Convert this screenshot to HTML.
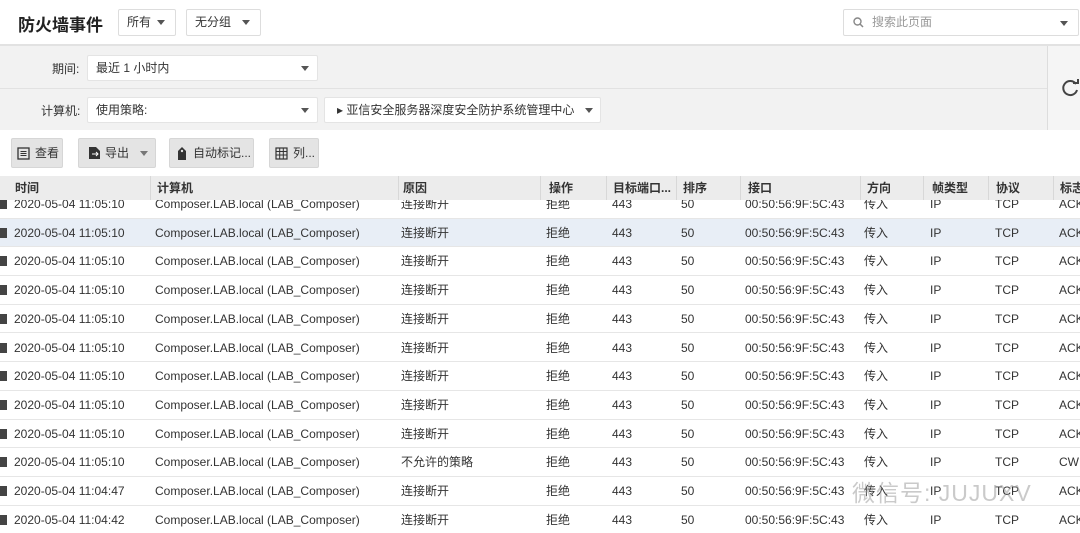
<!DOCTYPE html>
<html><head><meta charset="utf-8"><style>
*{margin:0;padding:0;box-sizing:border-box}
body{width:1080px;height:533px;overflow:hidden;background:#fff;font-family:"Liberation Sans","Noto Sans CJK SC",sans-serif;font-size:12px;color:#333;position:relative}
.a{position:absolute}
.dd{position:absolute;background:#fff;border:1px solid #ddd;border-radius:2px;font-size:12px;line-height:24px;padding-left:8px}
.tri{position:absolute;width:0;height:0;border-left:4px solid transparent;border-right:4px solid transparent;border-top:5px solid #555}
.btn{position:absolute;top:138px;height:30px;background:#e4e4e4;border:1px solid #d6d6d6;border-radius:2px;line-height:28px;font-size:12px;color:#333}
.row{position:absolute;left:0;width:1080px;height:28.7px;border-bottom:1px solid #e6e6e6;line-height:28px;white-space:nowrap}
.row span{position:absolute}
.hd{overflow:hidden;white-space:nowrap}
.hd span{position:absolute;font-weight:bold;color:#333;line-height:25px}
.sep{position:absolute;top:176px;width:1px;height:24px;background:#d8d8d8}
.ic{position:absolute;left:0;top:9px;width:7px;height:10px;background:#444}
</style></head><body>
<div class="a" style="left:18px;top:11px;font-size:17px;font-weight:bold;color:#222">防火墙事件</div>
<div class="dd" style="left:118px;top:9px;width:58px;height:27px">所有<div class="tri" style="left:38px;top:10px"></div></div>
<div class="dd" style="left:186px;top:9px;width:75px;height:27px">无分组<div class="tri" style="left:55px;top:10px"></div></div>
<div class="dd" style="left:843px;top:9px;width:236px;height:27px;color:#999;padding-left:28px">搜索此页面
<svg class="a" style="left:9px;top:7px" width="11" height="11" viewBox="0 0 11 11"><circle cx="4.5" cy="4.5" r="3.5" fill="none" stroke="#888" stroke-width="1.4"/><path d="M7 7l3 3" stroke="#888" stroke-width="1.5"/></svg>
<div class="tri" style="left:216px;top:11px"></div></div>
<div class="a" style="left:0;top:44px;width:1080px;height:2px;background:#e2e2e2"></div>
<div class="a" style="left:0;top:46px;width:1047px;height:84px;background:#f2f2f2"></div>
<div class="a" style="left:0;top:88px;width:1047px;height:1px;background:#e2e2e2"></div>
<div class="a" style="left:1047px;top:46px;width:1px;height:84px;background:#ddd"></div>
<div class="a" style="left:1048px;top:46px;width:32px;height:84px;background:#f5f5f5"></div>
<svg class="a" style="left:1061px;top:79px" width="19" height="19" viewBox="0 0 19 19"><path d="M15 5A7 7 0 1 0 16 11" fill="none" stroke="#444" stroke-width="2"/><path d="M12 4h5V-1" fill="none" stroke="#444" stroke-width="2"/></svg>
<div class="a" style="left:52px;top:60px">期间:</div>
<div class="dd" style="left:87px;top:55px;width:231px;height:26px;border-color:#e4e4e4">最近 1 小时内<div class="tri" style="left:213px;top:10px"></div></div>
<div class="a" style="left:41px;top:102px">计算机:</div>
<div class="dd" style="left:87px;top:97px;width:231px;height:26px;border-color:#e4e4e4">使用策略:<div class="tri" style="left:213px;top:10px"></div></div>
<div class="dd" style="left:324px;top:97px;width:277px;height:26px;border-color:#e4e4e4;padding-left:12px">▸ 亚信安全服务器深度安全防护系统管理中心<div class="tri" style="left:260px;top:10px"></div></div>
<div class="btn" style="left:11px;width:52px;padding-left:23px"><svg class="a" style="left:5px;top:8px" width="13" height="13"><rect x="1" y="1" width="11" height="11" fill="none" stroke="#333" stroke-width="1.3"/><path d="M3.5 4.5h6M3.5 6.5h6M3.5 8.5h6" stroke="#333"/></svg>查看</div>
<div class="btn" style="left:78px;width:78px;padding-left:26px"><svg class="a" style="left:9px;top:7px" width="13" height="14"><path d="M1 1h7l4 4v8H1z" fill="#333"/><path d="M4 8h6M8 6l2 2-2 2" stroke="#fff" fill="none"/></svg>导出<div class="tri" style="left:61px;top:12px;border-top-color:#777"></div></div>
<div class="btn" style="left:169px;width:85px;padding-left:23px"><svg class="a" style="left:6px;top:7px" width="12" height="15"><path d="M2 5l4-4 4 4v9H2z" fill="#333"/><circle cx="6" cy="5" r="1.2" fill="#e4e4e4"/></svg>自动标记...</div>
<div class="btn" style="left:269px;width:50px;padding-left:23px"><svg class="a" style="left:5px;top:8px" width="14" height="13"><rect x="1" y="1" width="11" height="11" fill="none" stroke="#333" stroke-width="1.2"/><path d="M1 4.5h11M1 8h11M4.7 1v11M8.3 1v11" stroke="#333"/></svg>列...</div>
<div class="a hd" style="left:0;top:176px;width:1080px;height:24px;background:#ececec">
<span style="left:15px">时间</span><span style="left:157px">计算机</span><span style="left:403px">原因</span><span style="left:549px">操作</span><span style="left:613px">目标端口...</span><span style="left:683px">排序</span><span style="left:748px">接口</span><span style="left:867px">方向</span><span style="left:932px">帧类型</span><span style="left:996px">协议</span><span style="left:1060px">标志</span></div>
<div class="sep" style="left:150px"></div><div class="sep" style="left:398px"></div><div class="sep" style="left:540px"></div><div class="sep" style="left:606px"></div><div class="sep" style="left:676px"></div><div class="sep" style="left:740px"></div><div class="sep" style="left:860px"></div><div class="sep" style="left:923px"></div><div class="sep" style="left:988px"></div><div class="sep" style="left:1053px"></div>
<div class="a" style="left:0;top:200px;width:1080px;height:333px;overflow:hidden">
<div id="rows"></div>
</div>
<script>
var r=document.getElementById('rows'),h='';
var times=['11:05:10','11:05:10','11:05:10','11:05:10','11:05:10','11:05:10','11:05:10','11:05:10','11:05:10','11:05:10','11:04:47','11:04:42'];
for(var i=0;i<12;i++){var t=-10+i*28.7;var bg=i==1?'background:#e8eef6;':'';
var re=i==9?'不允许的策略':'连接断开',fl=i==9?'CWI':'ACK';
h+='<div class="row" style="top:'+t+'px;'+bg+'"><div class="ic"></div><span style="left:14px">2020-05-04 '+times[i]+'</span><span style="left:155px">Composer.LAB.local (LAB_Composer)</span><span style="left:401px">'+re+'</span><span style="left:546px">拒绝</span><span style="left:612px">443</span><span style="left:681px">50</span><span style="left:745px">00:50:56:9F:5C:43</span><span style="left:864px">传入</span><span style="left:930px">IP</span><span style="left:995px">TCP</span><span style="left:1059px">'+fl+'</span></div>';}
r.innerHTML=h;
</script>
<div class="a" style="left:852px;top:474px;font-size:23px;color:rgba(150,150,150,0.5);letter-spacing:1px">微信号: JUJUXV</div>
</body></html>
